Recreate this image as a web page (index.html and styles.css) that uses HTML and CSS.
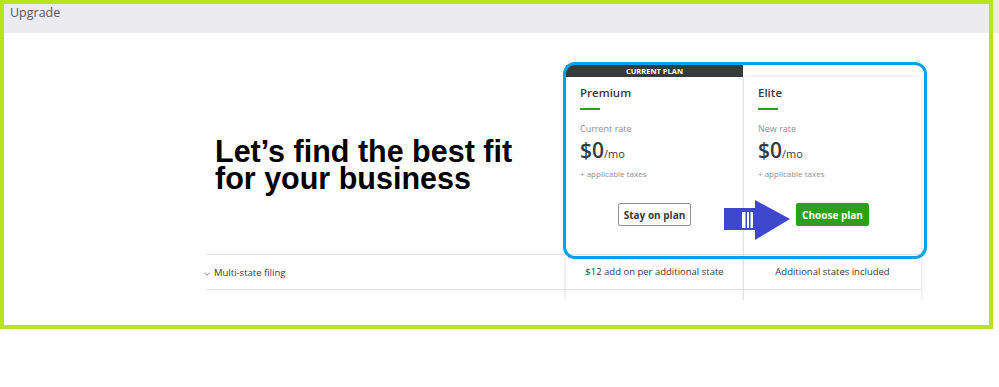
FILE: index.html
```html
<!DOCTYPE html>
<html lang="en">
  <head>
    <meta charset="UTF-8" />
    <meta name="viewport" content="width=device-width, initial-scale=1.0" />
    <title>Upgrade</title>
    <link rel="stylesheet" href="styles.css">
  </head>
  <body>
    <div class="page">
      <header class="topbar">Upgrade</header>

      <main class="content">
        <div class="compare">
          <div class="features">
            <div class="intro">
              <h1><span>Let’s find the best fit</span><span>for your business</span></h1>
            </div>
            <div class="feature-row"><span class="chevron"></span>Multi-state filing</div>
            <div class="feature-row"></div>
          </div>

          <div class="plan">
            <div class="badge">CURRENT PLAN</div>
            <div class="plan-body">
              <div class="plan-card">
                <div class="plan-name">Premium</div>
                <div class="plan-bar"></div>
                <div class="rate-label">Current rate</div>
                <div class="price">$0<span>/mo</span></div>
                <div class="taxes">+ applicable taxes</div>
                <button class="btn btn-outline">Stay on plan</button>
              </div>
              <div class="plan-row">$12 add on per additional state</div>
              <div class="plan-row"></div>
            </div>
          </div>

          <div class="plan">
            <div class="badge badge-empty"></div>
            <div class="plan-body">
              <div class="plan-card">
                <div class="plan-name">Elite</div>
                <div class="plan-bar"></div>
                <div class="rate-label">New rate</div>
                <div class="price">$0<span>/mo</span></div>
                <div class="taxes">+ applicable taxes</div>
                <button class="btn btn-green">Choose plan</button>
              </div>
              <div class="plan-row">Additional states included</div>
              <div class="plan-row"></div>
            </div>
          </div>
        </div>
      </main>

      <!-- annotations drawn over the screenshot -->
      <div class="mark-frame"></div>
      <div class="mark-box"></div>
      <svg class="mark-arrow" width="72" height="48" viewBox="0 0 72 48">
        <rect x="4" y="12" width="33" height="22" fill="#3f48cc" />
        <polygon points="35,4 70,23 35,44" fill="#3f48cc" />
        <rect x="22" y="16" width="11" height="16" fill="#fff" />
        <rect x="25.5" y="16" width="1.5" height="16" fill="#3f48cc" />
        <rect x="29" y="16" width="1.5" height="16" fill="#3f48cc" />
      </svg>
    </div>
  </body>
</html>
```

FILE: styles.css
```css
body {
  margin: 0;
  background-color: #fff;
  font-family: "Open Sans", "Liberation Sans", sans-serif;
  color: #393a3d;
}
.page {
  position: relative;
  width: 999px;
  height: 387px;
}
.topbar {
  height: 33px;
  background-color: #ececf0;
  color: #55575b;
  font-size: 12.5px;
  line-height: 26px;
  padding-left: 10px;
  box-sizing: border-box;
}
.content {
  height: 267px;
  overflow: hidden;
}
.compare {
  display: flex;
  margin-left: 206px;
  padding-top: 32px;
}
.features {
  width: 360px;
}
.intro {
  height: 189px;
  padding: 75px 0 0 9px;
  box-sizing: border-box;
}
.intro h1 {
  margin: 0;
  font-family: "Liberation Sans", Arial, sans-serif;
  font-size: 30.5px;
  font-weight: bold;
  color: #000;
}
.intro h1 span {
  display: block;
  height: 27px;
  line-height: 22px;
}
.feature-row {
  height: 34px;
  border-top: 1px solid #e3e3e8;
  font-size: 9.5px;
  line-height: 33px;
  display: flex;
  align-items: center;
}
.chevron {
  width: 3px;
  height: 3px;
  border-right: 1px solid #a0a2a8;
  border-bottom: 1px solid #a0a2a8;
  transform: rotate(45deg);
  margin: 2px 5px 0 -1px;
}
.plan {
  width: 177px;
  margin-right: 1px;
}
.badge {
  height: 12px;
  background-color: #393a3d;
  color: #fff;
  font-size: 7.5px;
  font-weight: bold;
  line-height: 12px;
  text-align: center;
}
.badge-empty {
  background: none;
}
.plan-body {
  background-color: #fff;
  box-shadow: 0 0 4px rgba(0, 0, 0, 0.16);
  height: 300px;
}
.plan-card {
  height: 177px;
  padding: 8px 14px 0;
  box-sizing: border-box;
  display: flex;
  flex-direction: column;
}
.plan-name {
  font-size: 11.5px;
  font-weight: 600;
  line-height: 16px;
}
.plan-bar {
  width: 20px;
  height: 2px;
  margin-top: 7px;
  background-color: #2ca01c;
}
.rate-label {
  margin-top: 13px;
  font-size: 9px;
  line-height: 12px;
  color: #8d9096;
}
.price {
  margin-top: 3px;
  font-size: 21px;
  line-height: 24px;
  font-weight: 600;
}
.price span {
  font-size: 11px;
  font-weight: normal;
}
.taxes {
  margin-top: 2px;
  font-size: 8px;
  line-height: 11px;
  color: #8d9096;
}
.btn {
  align-self: center;
  margin-top: 24px;
  height: 23px;
  padding: 0 5px;
  font-family: inherit;
  font-size: 10px;
  font-weight: bold;
  border-radius: 2px;
  cursor: pointer;
}
.btn-outline {
  background-color: #fff;
  color: #393a3d;
  border: 1px solid #8d9096;
}
.btn-green {
  background-color: #2ca01c;
  color: #fff;
  border: 1px solid #2ca01c;
}
.plan-row {
  height: 34px;
  border-top: 1px solid #e3e3e8;
  font-size: 9.5px;
  line-height: 33px;
  text-align: center;
}
.mark-frame {
  position: absolute;
  left: 0;
  top: 0;
  width: 993px;
  height: 329px;
  border: 4px solid #b5e61d;
  box-sizing: border-box;
}
.mark-box {
  position: absolute;
  left: 563px;
  top: 62px;
  width: 364px;
  height: 197px;
  border: 3px solid #00a2e8;
  border-radius: 12px;
  box-sizing: border-box;
}
.mark-arrow {
  position: absolute;
  left: 720px;
  top: 196px;
}
```
